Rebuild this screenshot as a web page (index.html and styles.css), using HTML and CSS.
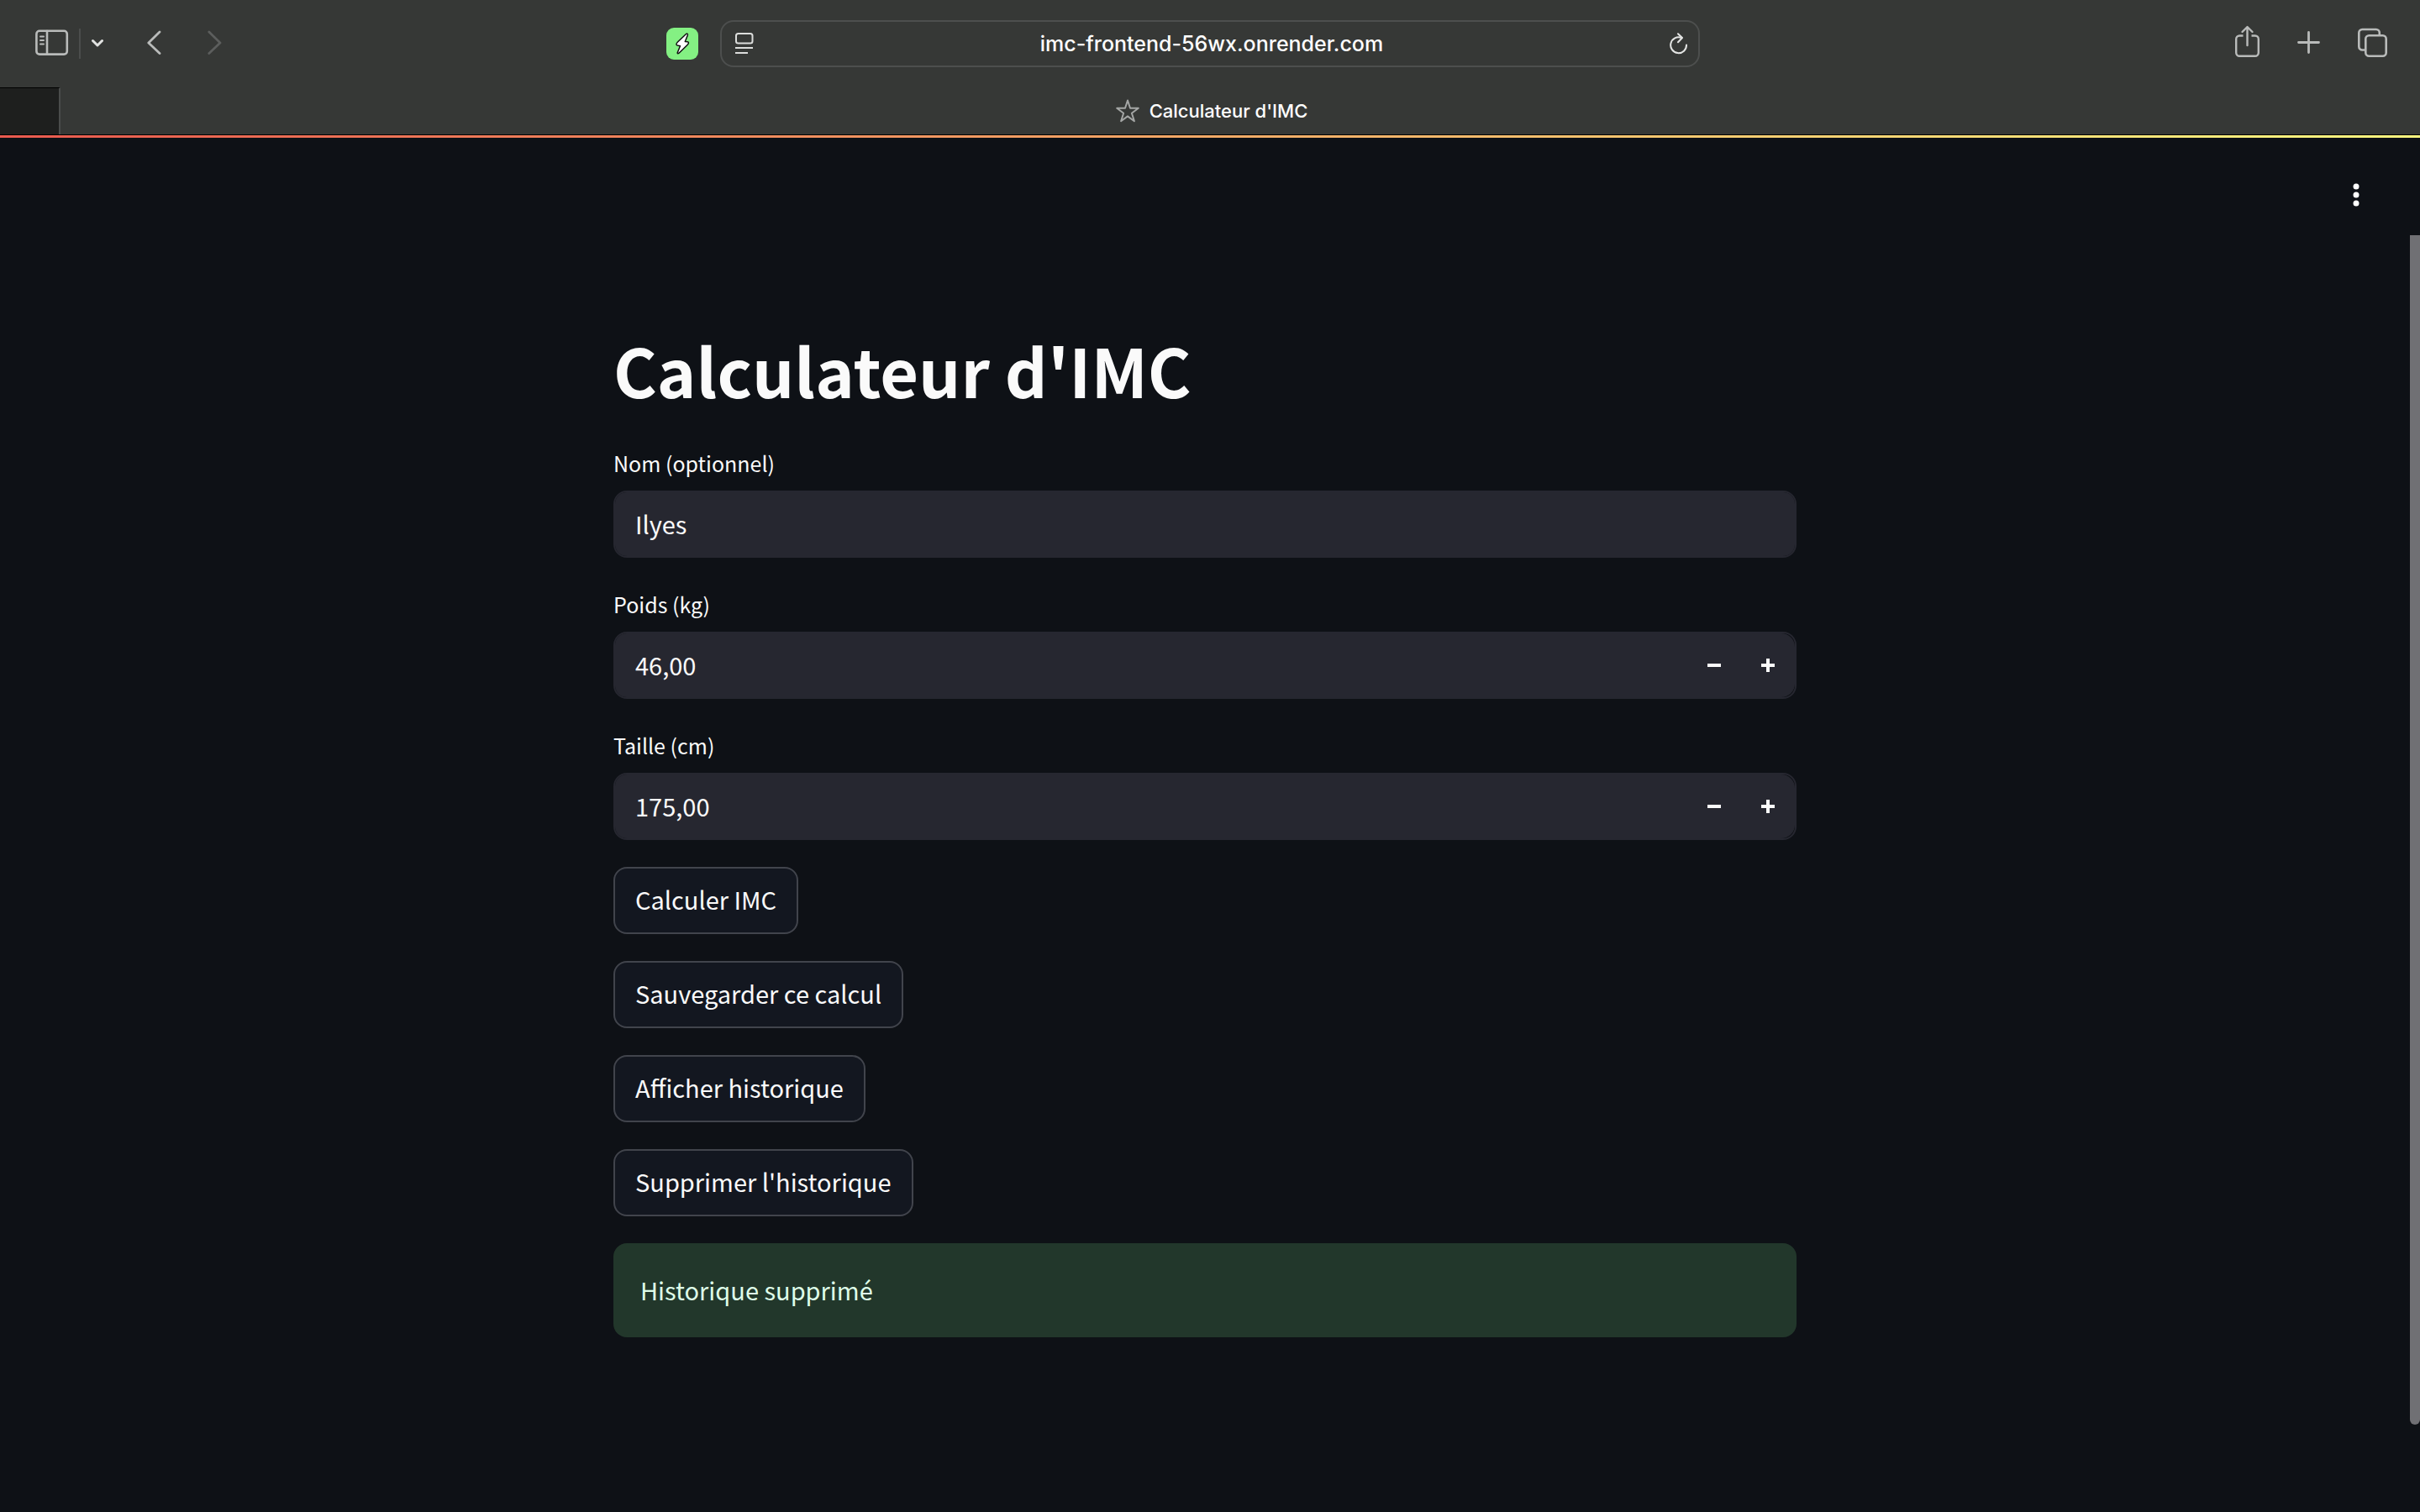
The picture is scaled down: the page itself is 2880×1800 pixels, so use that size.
FILE: index.html
```html
<!DOCTYPE html>
<html lang="fr">
<head>
<meta charset="utf-8">
<meta name="viewport" content="width=device-width, initial-scale=1">
<title>Calculateur d'IMC</title>
<link rel="stylesheet" href="styles.css">
</head>
<body>
<header class="browser">
  <div class="toolbar">
    <div class="toolbar-side">
      <button class="tool" type="button" aria-label="Barre latérale">
        <svg width="40" height="44" viewBox="0 0 40 44" fill="none" stroke="#b9bbba" stroke-width="2.6" stroke-linecap="round"><rect x="1.4" y="6.8" width="36.4" height="27.8" rx="3.6"/><path d="M14 7v27.500"/><path d="M6 13.500h4M6 18h4M6 22.500h4" stroke-width="2"/></svg>
      </button>
      <span class="divider"></span>
      <button class="tool tool-chevron" type="button" aria-label="Groupes d'onglets">
        <svg width="14" height="44" viewBox="0 0 14 44" fill="none" stroke="#e2e3e2" stroke-width="3" stroke-linecap="round" stroke-linejoin="round"><path d="M1.500 18.500 7 24l5.500-5.500"/></svg>
      </button>
      <button class="tool tool-back" type="button" aria-label="Précédent">
        <svg width="18" height="44" viewBox="0 0 18 44" fill="none" stroke="#b9bbba" stroke-width="2.8" stroke-linecap="round" stroke-linejoin="round"><path d="M15 8 1.800 21 15 33.500"/></svg>
      </button>
      <button class="tool tool-forward" type="button" aria-label="Suivant" disabled>
        <svg width="18" height="44" viewBox="0 0 18 44" fill="none" stroke="#5c5e5d" stroke-width="2.800" stroke-linecap="round" stroke-linejoin="round"><path d="M1.800 8 15 21 1.800 33.500"/></svg>
      </button>
      <button class="tool tool-extension" type="button" aria-label="Extension">
        <svg width="38" height="38" viewBox="0 0 38 38"><rect width="38" height="38" rx="9" fill="#84f083"/><path d="M23.500 7.500 13.500 17c-1.500 1.500-2.300 3.500-.500 4l3.500.700-3.200 7.800c-.500 1.500.700 1.500 1.700.700l10-9.700c1.800-1.800 2-3.500.300-3.700l-3-.300 3-7.500c.500-1.500-.500-2.500-1.800-1.500z" fill="#fff" stroke="#111" stroke-width="1.500" stroke-linejoin="round"/></svg>
      </button>
    </div>
    <div class="address">
      <svg width="22" height="26" viewBox="0 0 22 26" fill="none" stroke="#dcdddc" stroke-width="2"><rect x="1" y="1" width="19.500" height="11.500" rx="2.500"/><path d="M0 18h21M0 24h15"/></svg>
      <input class="url" type="text" value="imc-frontend-56wx.onrender.com" aria-label="Adresse">
      <button class="tool" type="button" aria-label="Recharger">
        <svg width="22" height="26" viewBox="0 0 22 26" fill="none" stroke="#e4e5e4" stroke-width="2" stroke-linecap="round" stroke-linejoin="round"><path d="M20 14.500A9.400 9.400 0 1 1 14 6"/><path d="M10 1.200 15 6l-5 5.200"/></svg>
      </button>
    </div>
    <div class="toolbar-side toolbar-end">
      <button class="tool" type="button" aria-label="Partager">
        <svg width="30" height="44" viewBox="0 0 30 44" fill="none" stroke="#b9bbba" stroke-width="2.400" stroke-linecap="round" stroke-linejoin="round"><path d="M9.500 12.500H5.200a4 4 0 0 0-4 4v16.300a4 4 0 0 0 4 4h18.600a4 4 0 0 0 4-4V16.500a4 4 0 0 0-4-4h-4.300" stroke-linecap="butt"/><path d="M14.500 24V2.500M8.500 8l6-6 6 6"/></svg>
      </button>
      <button class="tool" type="button" aria-label="Nouvel onglet">
        <svg width="28" height="44" viewBox="0 0 28 44" fill="none" stroke="#b9bbba" stroke-width="2.800" stroke-linecap="round"><path d="M13.500 8.500v24M1.500 20.500h24"/></svg>
      </button>
      <button class="tool" type="button" aria-label="Vue d'ensemble des onglets">
        <svg width="36" height="44" viewBox="0 0 36 44" fill="none" stroke="#b9bbba" stroke-width="2.600"><rect x="9.300" y="12.300" width="24.400" height="24.400" rx="4"/><path d="M9 29.500H5.300a4 4 0 0 1-4-4V9a4 4 0 0 1 4-4h16.500a4 4 0 0 1 4 4v3"/></svg>
      </button>
    </div>
  </div>
  <div class="tabs">
    <div class="tab-stub"></div>
    <div class="tab">
      <svg width="28" height="28" viewBox="0 0 28 28" fill="none" stroke="#a4a6a5" stroke-width="2" stroke-linejoin="round"><path d="M14 1.500l3 9.300h9.800l-7.900 5.900 3 9.500L14 20.400l-7.900 5.800 3-9.500-7.900-5.900H11z"/></svg>
      <span>Calculateur d'IMC</span>
    </div>
  </div>
</header>
<div class="app">
  <div class="decoration"></div>
  <div class="app-header">
    <button class="tool" type="button" aria-label="Menu principal">
      <svg width="8" height="28" viewBox="0 0 8 28" fill="#fff"><circle cx="4" cy="4" r="3.500"/><circle cx="4" cy="14" r="3.500"/><circle cx="4" cy="24" r="3.500"/></svg>
    </button>
  </div>
  <main class="content">
    <h1>Calculateur d'IMC</h1>
    <div class="field">
      <label for="nom">Nom (optionnel)</label>
      <div class="control"><input id="nom" type="text" value="Ilyes"></div>
    </div>
    <div class="field">
      <label for="poids">Poids (kg)</label>
      <div class="control number">
        <input id="poids" type="text" inputmode="decimal" value="46,00">
        <button type="button" aria-label="Diminuer le poids"><svg width="16" height="16" viewBox="0 0 16 16" fill="#fafafa"><path d="M0 6h16v4H0z"/></svg></button>
        <button type="button" aria-label="Augmenter le poids"><svg width="16" height="16" viewBox="0 0 16 16" fill="#fafafa"><path d="M6 0h4v6h6v4h-6v6H6v-6H0V6h6z"/></svg></button>
      </div>
    </div>
    <div class="field">
      <label for="taille">Taille (cm)</label>
      <div class="control number">
        <input id="taille" type="text" inputmode="decimal" value="175,00">
        <button type="button" aria-label="Diminuer la taille"><svg width="16" height="16" viewBox="0 0 16 16" fill="#fafafa"><path d="M0 6h16v4H0z"/></svg></button>
        <button type="button" aria-label="Augmenter la taille"><svg width="16" height="16" viewBox="0 0 16 16" fill="#fafafa"><path d="M6 0h4v6h6v4h-6v6H6v-6H0V6h6z"/></svg></button>
      </div>
    </div>
    <button class="action" type="button">Calculer IMC</button>
    <button class="action" type="button">Sauvegarder ce calcul</button>
    <button class="action" type="button">Afficher historique</button>
    <button class="action" type="button">Supprimer l'historique</button>
    <div class="alert" role="alert">Historique supprimé</div>
  </main>
  <div class="scroll-thumb"></div>
</div>
</body>
</html>
```
FILE: styles.css
```css
* {
  box-sizing: border-box;
}

body {
  margin: 0;
  min-height: 100vh;
  display: flex;
  flex-direction: column;
  background: #0e1116;
  color: #fafafa;
  font-family: "Noto Sans CJK JP", "Noto Sans", sans-serif;
  font-size: 29px;
}

button,
input {
  margin: 0;
  padding: 0;
  border: 0;
  background: none;
  color: inherit;
  font: inherit;
}

svg {
  display: block;
  flex: none;
}

/* Browser chrome */
.browser {
  background: #363836;
  border-bottom: 1px solid #000;
  font-family: Inter, "Liberation Sans", sans-serif;
  font-weight: 500;
}

.toolbar {
  display: grid;
  grid-template-columns: 25fr 34fr 25fr;
  align-items: center;
  height: 104px;
}

.toolbar-side {
  display: flex;
  align-items: center;
  padding: 0 26px 0 42px;
}

.toolbar-end {
  justify-content: flex-end;
  gap: 44px;
  padding: 0 38px 0 0;
}

.tool {
  flex: none;
}

.divider {
  width: 2px;
  height: 36px;
  margin: 0 13px 0 12px;
  background: #4b4d4c;
}

.tool-back {
  margin-left: 52px;
}

.tool-forward {
  margin-left: 54px;
}

.tool-extension {
  margin-left: auto;
}

.address {
  display: flex;
  align-items: center;
  height: 56px;
  padding: 0 12px 0 16px;
  border: 2px solid #4d4f4e;
  border-radius: 16px;
}

.url {
  flex: 1;
  min-width: 0;
  color: #fff;
  font-size: 25px;
  text-align: center;
}

.tabs {
  display: flex;
  height: 56px;
}

.tab-stub {
  width: 72px;
  background: #1e1f1e;
  border-top: 1px solid #000;
  border-right: 2px solid #4a4c4b;
}

.tab {
  flex: 1;
  display: flex;
  align-items: center;
  justify-content: center;
  gap: 12px;
  padding-right: 68px;
  color: #fff;
  font-size: 22px;
}

/* Application */
.app {
  position: relative;
  flex: 1;
  padding-right: 12px;
}

.decoration {
  height: 3px;
  margin-right: -12px;
  background: linear-gradient(90deg, #ea5a4f, #fffa80);
}

.app-header {
  display: flex;
  align-items: center;
  justify-content: flex-end;
  height: 136px;
  padding-right: 60px;
}

.content {
  display: flex;
  flex-direction: column;
  align-items: flex-start;
  gap: 32px;
  max-width: 1408px;
  margin: 0 auto;
  padding: 88px 0 160px;
}

h1 {
  margin: 0;
  padding-bottom: 4px;
  font-size: 79px;
  font-weight: 700;
  line-height: 104px;
}

.field {
  width: 100%;
}

.field label {
  display: block;
  margin-bottom: 10px;
  font-size: 25px;
  line-height: 46px;
}

.control {
  display: flex;
  height: 80px;
  border: 2px solid #262730;
  border-radius: 16px;
}

.control input {
  flex: 1;
  min-width: 0;
  padding: 0 24px 2px;
  background: #262730;
  border-radius: 14px;
}

.number input {
  border-radius: 14px 0 0 14px;
}

.number button {
  display: flex;
  align-items: center;
  justify-content: center;
  width: 64px;
  background: #262730;
}

.number button:last-child {
  border-radius: 0 16px 16px 0;
}

.action {
  height: 80px;
  padding: 0 24px 4px;
  background: #131720;
  border: 2px solid #41444c;
  border-radius: 16px;
}

.alert {
  width: 100%;
  padding: 32px 32px 34px;
  border-radius: 16px;
  background: #22372b;
  color: #dffde9;
  line-height: 46px;
}

.scroll-thumb {
  position: absolute;
  top: 119px;
  right: 0;
  bottom: 104px;
  width: 12px;
  border-radius: 0 0 6px 6px;
  background: #707074;
}
```
